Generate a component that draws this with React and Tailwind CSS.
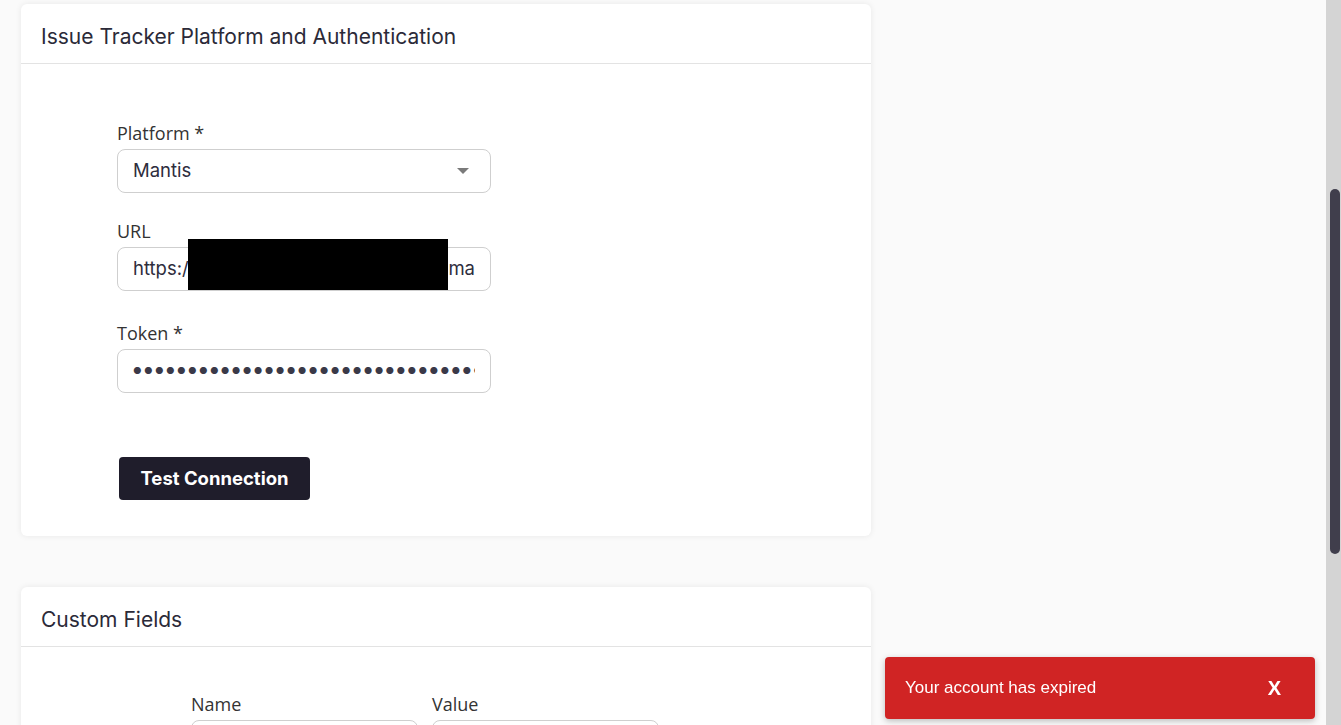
import React from "react";

const head = { fontFamily: "Inter, 'Open Sans', sans-serif" };
const body = { fontFamily: "'Open Sans', 'Liberation Sans', Arial, sans-serif" };
const toast = { fontFamily: "'Liberation Sans', Arial, sans-serif" };

const Card = ({ title, children }) => (
  <section className="w-[850px] bg-white rounded-md shadow-[0_0_6px_rgba(0,0,0,0.08)]">
    <div className="h-[60px] px-5 pt-[6px] flex items-center border-b border-[#e3e3e3]">
      <h2 className="text-[21px] text-[#2b2a38]" style={head}>{title}</h2>
    </div>
    {children}
  </section>
);

const Label = ({ children }) => (
  <div className="text-[18px] leading-6 text-[#333] mb-[4px]" style={body}>{children}</div>
);

const Field = ({ children }) => (
  <div className="h-[44px] w-[374px] rounded-lg border border-[#cfcfcf] bg-white px-[15px] flex items-center text-[18.5px] text-[#2e2d3d]" style={head}>
    {children}
  </div>
);

export default function App() {
  return (
    <div className="h-screen w-full flex overflow-hidden bg-[#fafafa]">
      <main className="flex-1 pl-[21px] pt-[4px] flex flex-col gap-[51px]">
        <Card title="Issue Tracker Platform and Authentication">
          <div className="pl-[96px] pt-[57px] pb-[36px]">
            <Label>Platform *</Label>
            <Field>
              <span className="flex-1">Mantis</span>
              <svg width="12" height="6" viewBox="0 0 12 6" className="mr-[6px]"><path d="M0 0h12L6 6z" fill="#7a7a7a" /></svg>
            </Field>

            <div className="mt-[26px]">
              <Label>URL</Label>
              <div className="relative">
                <Field>
                  <span className="flex-1">https:/</span>
                  <span>ma</span>
                </Field>
                <div className="absolute left-[71px] top-[-8px] w-[260px] h-[51px] bg-black" />
              </div>
            </div>

            <div className="mt-[30px]">
              <Label>Token *</Label>
              <Field>
                <div className="overflow-hidden whitespace-nowrap text-[#3a3948] text-[9.5px] tracking-[2.3px] w-full">
                  {"●".repeat(33)}
                </div>
              </Field>
            </div>

            <button className="mt-[64px] ml-[2px] h-[43px] w-[191px] rounded bg-[#1f1d2b] text-white text-[18.5px] font-bold" style={head}>
              Test Connection
            </button>
          </div>
        </Card>

        <Card title="Custom Fields">
          <div className="pl-[170px] pt-[45px] flex gap-[14px]">
            <div>
              <Label>Name</Label>
              <div className="h-[44px] w-[227px] rounded-lg border border-[#cfcfcf] bg-white" />
            </div>
            <div>
              <Label>Value</Label>
              <div className="h-[44px] w-[227px] rounded-lg border border-[#cfcfcf] bg-white" />
            </div>
          </div>
        </Card>
      </main>

      <div className="w-[15px] bg-[#d4d4d4] flex flex-col pt-[189px] pl-[4px]">
        <div className="h-[365px] w-[10px] rounded-full bg-[#403e4c]" />
      </div>

      <div className="fixed right-[26px] bottom-[6px] w-[430px] h-[62px] rounded bg-[#d02424] shadow-[0_2px_6px_rgba(0,0,0,0.25)] flex items-center pl-5 pr-[34px] text-white" style={toast}>
        <span className="flex-1 text-[17px]">Your account has expired</span>
        <span className="text-[20px] font-bold">X</span>
      </div>
    </div>
  );
}
